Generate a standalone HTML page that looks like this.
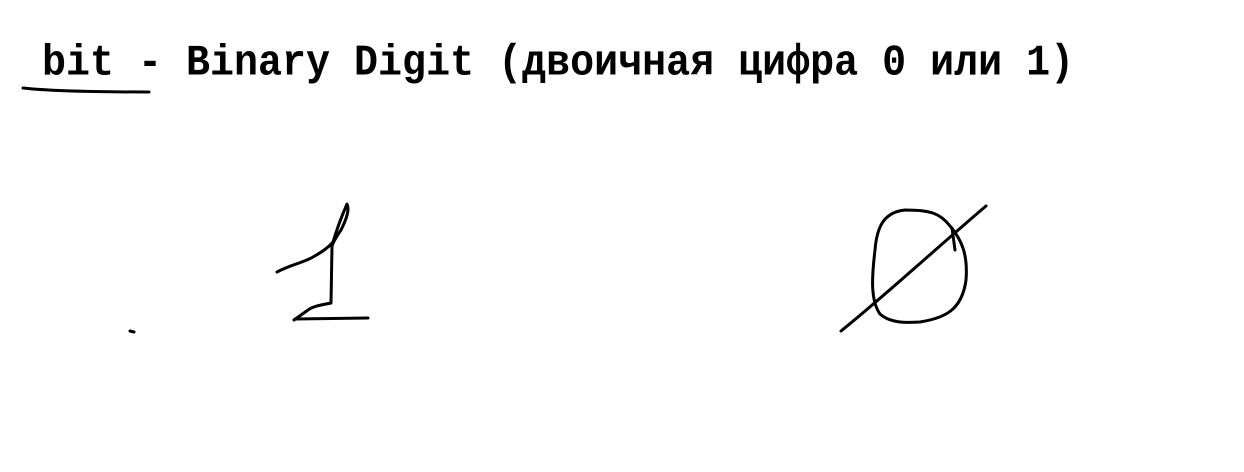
<!DOCTYPE html>
<html><head><meta charset="utf-8"><style>
html,body{margin:0;padding:0;background:#fff;width:1244px;height:472px;overflow:hidden}
.t{position:absolute;left:42px;top:38px;font-family:"Liberation Mono",monospace;font-weight:bold;font-size:40px;line-height:48px;color:#000;white-space:pre;transform:scaleY(1.1);transform-origin:0 0}
svg{position:absolute;left:0;top:0}
</style></head><body>
<div class="t">bit - Binary Digit (двоичная цифра 0 или 1)</div>
<svg width="1244" height="472" fill="none" stroke="#000" stroke-width="3" stroke-linecap="round" stroke-linejoin="round">
<path d="M23 88 C50 91 100 92 149 92"/>
<path d="M277 272 C290 265 305 262 313 257 C322 252 328 248 333 242 C336 232 340 220 347 204 C350 210 346 220 341 230 C337 236 334 240 332 246 L331 303 C322 305 313 306 308 310 L294 320"/>
<path d="M295 319 L368 318"/>
<path d="M130 331 L134 332"/>
<path d="M905 210 C885 212 877 225 875 250 C872 275 870 300 880 314 C890 323 905 323 920 322 C945 318 962 310 966 280 C968 255 962 240 950 226 C940 213 930 210 905 210 Z"/>
<path d="M841 331 C880 300 940 245 986 206"/>
<path d="M952 228 L955 250"/>
</svg>
</body></html>
